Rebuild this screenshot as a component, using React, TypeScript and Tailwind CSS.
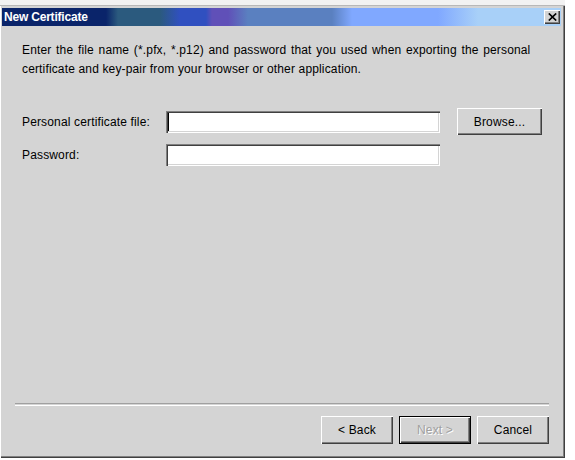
import React from "react";

const raised =
  "bg-[#d4d4d4] shadow-[inset_1px_1px_0_#ffffff,inset_-1px_-1px_0_#404040,inset_-2px_-2px_0_#808080]";
const sunken =
  "bg-white shadow-[inset_1px_1px_0_#808080,inset_2px_2px_0_#404040,inset_-1px_-1px_0_#ffffff,inset_-2px_-2px_0_#d4d4d4]";

const Button = ({
  label,
  disabled,
  isDefault,
  className,
}: {
  label: string;
  disabled?: boolean;
  isDefault?: boolean;
  className?: string;
}) => (
  <button
    type="button"
    className={`${raised} ${isDefault ? "border border-black" : ""} ${
      disabled ? "text-[#a0a0a0] [text-shadow:1px_1px_0_#ffffff]" : "text-black"
    } flex items-center justify-center text-[12px] tracking-[0.15px] ${className || ""}`}
  >
    {label}
  </button>
);

const App = () => {
  return (
    <div className="w-[575px] h-[460px] bg-white font-['Liberation_Sans',Arial,sans-serif]">
      <div className="w-[565px] h-[458px] bg-[#f2f2f2] pt-[5px]">
        <div className="h-[453px] flex flex-col bg-[#d4d4d4] border-t border-[#b8b8b8] pt-[2px] pl-[2px] pr-[4px] shadow-[inset_1px_0_0_#ffffff,inset_-1px_-1px_0_#404040,inset_-2px_-2px_0_#808080]">
          {/* title bar */}
          <div className="h-[18px] flex items-center justify-between bg-[linear-gradient(90deg,#0a246a_0px,#0a246a_104px,#2b5a7e_116px,#2b5a7e_158px,#3050c0_178px,#3050c0_204px,#6050b8_210px,#6050b8_226px,#5a80c0_246px,#5a80c0_330px,#80a8ff_350px,#80a8ff_436px,#a8d0f8_476px,#a8d0f8_100%)]">
            <span className="pl-[2px] text-white font-bold text-[12px] leading-none tracking-[-0.2px]">
              New Certificate
            </span>
            <div className={`${raised} w-[16px] h-[14px] mr-[1px] flex items-center justify-center`}>
              <svg width="9" height="8" viewBox="0 0 9 8">
                <path d="M0.8 0.5 L8.2 7.5 M8.2 0.5 L0.8 7.5" stroke="#000" strokeWidth="1.7" />
              </svg>
            </div>
          </div>

          {/* body */}
          <div className="flex-1 flex flex-col pl-[20px] pr-[12px] pt-[15px] text-[12px] tracking-[0.15px] text-black">
            <p className="leading-[19px]">
              <span className="[word-spacing:1.2px]">
                Enter the file name (*.pfx, *.p12) and password that you used when exporting the personal
              </span>
              <br />
              certificate and key-pair from your browser or other application.
            </p>

            <div className="mt-[29px] grid grid-cols-[144px_274px_102px] gap-y-[9px] items-center">
              <span>Personal certificate file:</span>
              <div className={`${sunken} h-[22px] relative`}>
                <span className="absolute left-[2px] top-[2px] w-[1px] h-[18px] bg-black" />
              </div>
              <Button label="Browse..." className="ml-[17px] w-[85px] h-[27px]" />

              <span>Password:</span>
              <div className={`${sunken} h-[22px]`} />
              <span />
            </div>

            <div className="flex-1" />
          </div>

          {/* separator */}
          <div className="ml-[13px] mr-[12px] h-[2px] border-t border-[#a0a0a0] shadow-[0_1px_0_#ffffff]" />

          <div className="flex justify-end gap-[6px] pr-[12px] mt-[11px] mb-[14px]">
            <Button label="< Back" className="w-[72px] h-[28px]" />
            <Button label="Next >" disabled isDefault className="w-[72px] h-[28px]" />
            <Button label="Cancel" className="w-[72px] h-[28px]" />
          </div>
        </div>
      </div>
    </div>
  );
};

export default App;
